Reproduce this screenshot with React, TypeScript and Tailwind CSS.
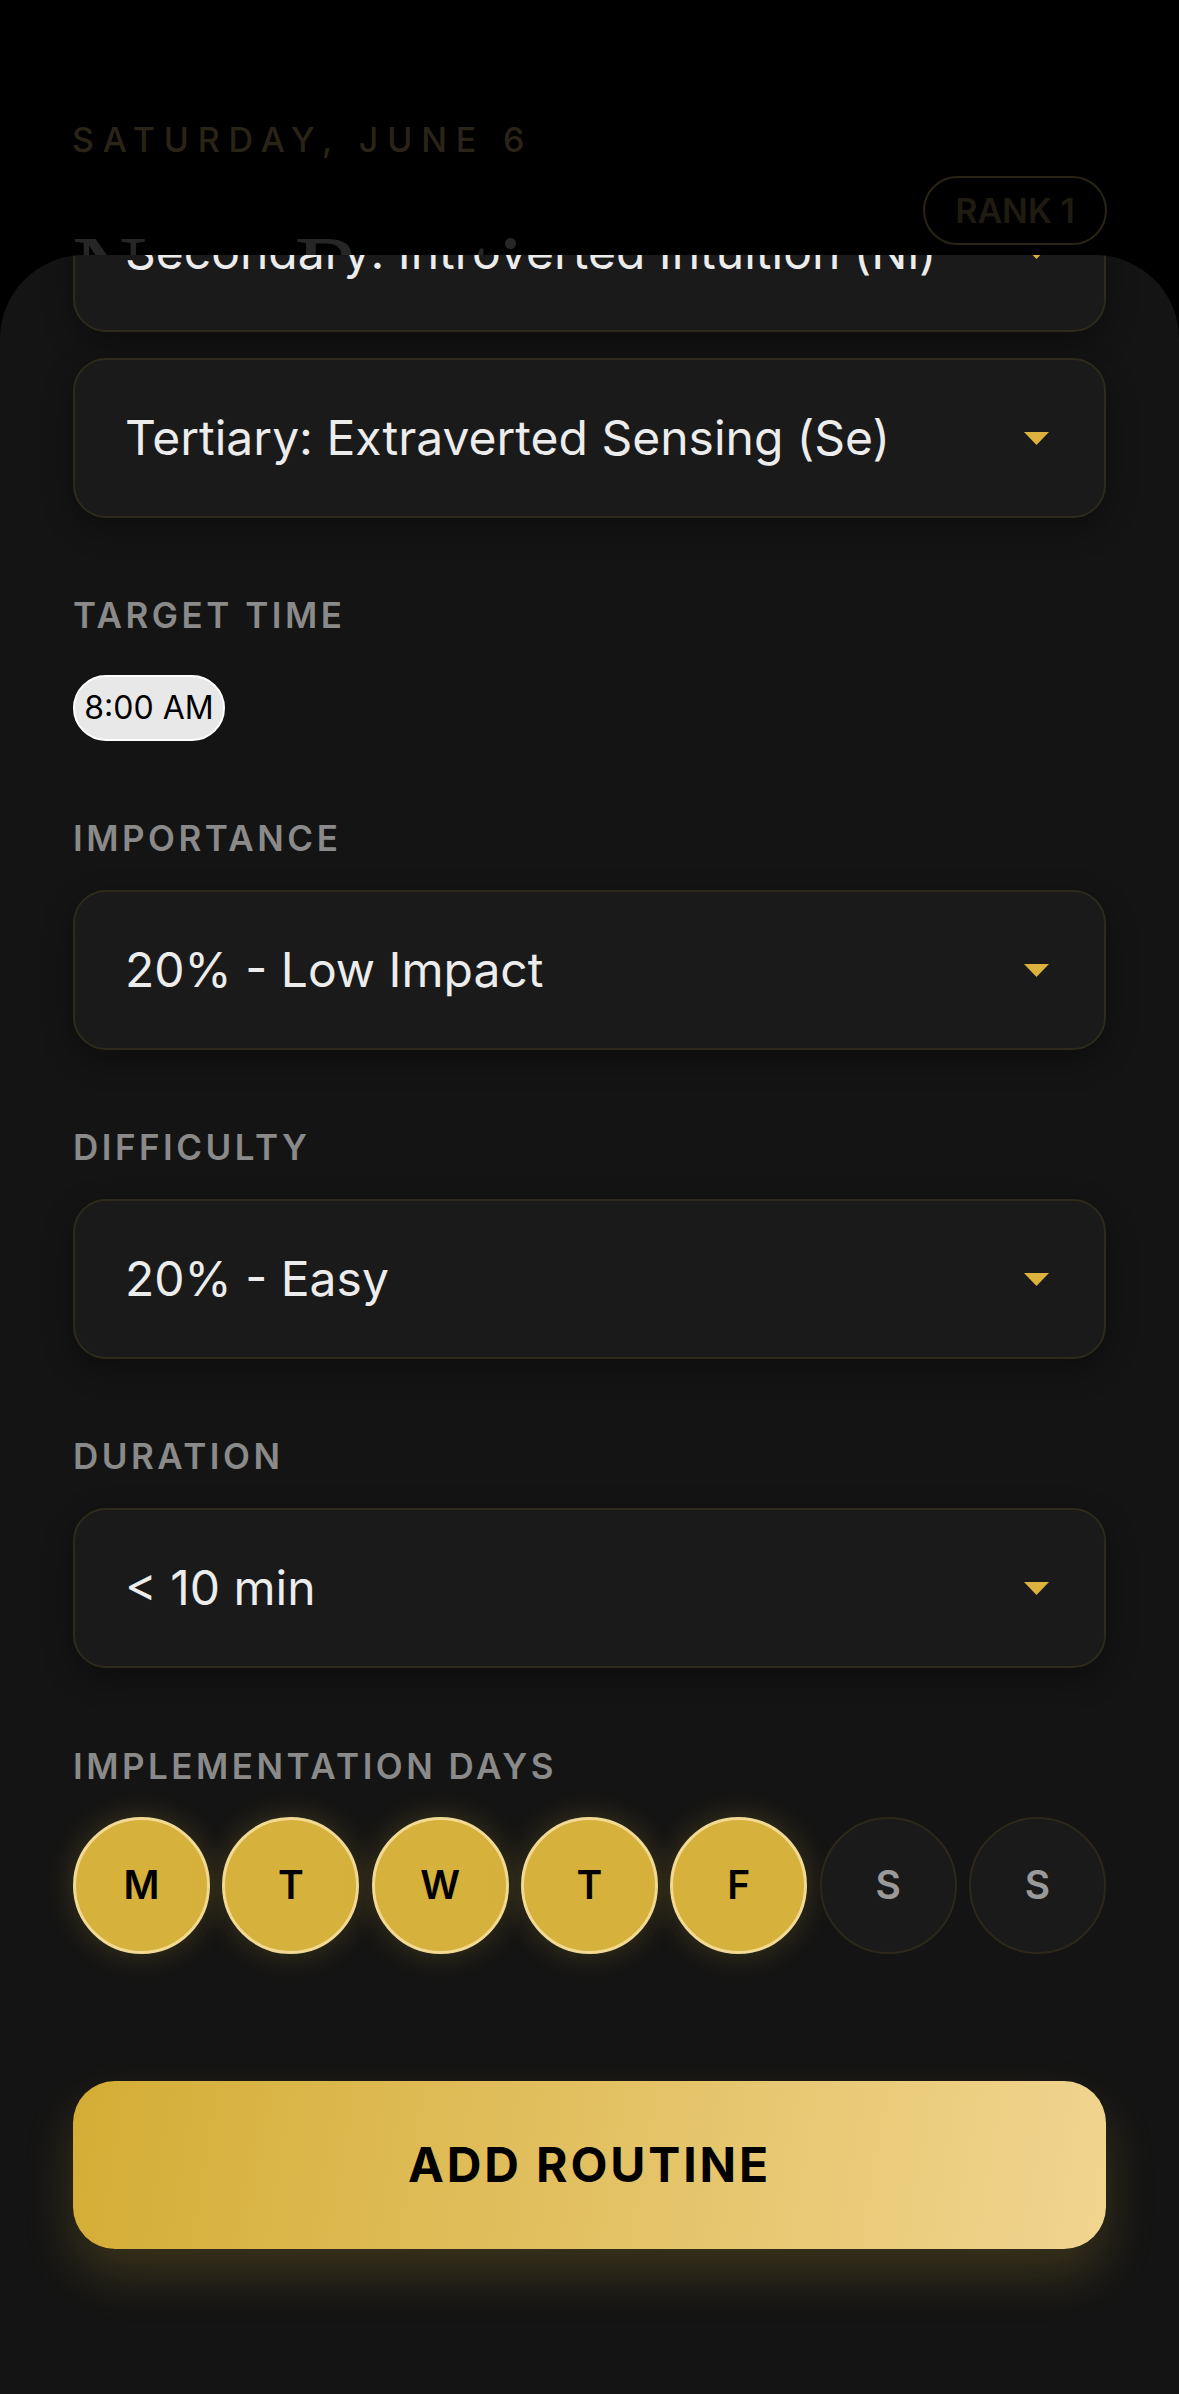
import React from 'react';

const days = [
  { key: 'mon', label: 'M', on: true },
  { key: 'tue', label: 'T', on: true },
  { key: 'wed', label: 'W', on: true },
  { key: 'thu', label: 'T', on: true },
  { key: 'fri', label: 'F', on: true },
  { key: 'sat', label: 'S', on: false },
  { key: 'sun', label: 'S', on: false },
];

function Caret() {
  return (
    <svg width="25" height="13" viewBox="0 0 25 13" aria-hidden="true">
      <polygon points="0,0 25,0 12.5,13" fill="#dcb23c" />
    </svg>
  );
}

function Select({ value }: { value: string }) {
  return (
    <div className="flex h-[160px] items-center justify-between rounded-[33px] border-2 border-[#2e2a1c] bg-[#1a1a1a] pl-[50px] pr-[55px] shadow-[0_10px_30px_rgba(0,0,0,0.35)]">
      <span className="text-[48px] leading-none text-[#ececec]">{value}</span>
      <Caret />
    </div>
  );
}

function Label({ children }: { children: React.ReactNode }) {
  return (
    <div className="text-[35px] font-semibold uppercase leading-none tracking-[0.1em] text-[#8a8a8a]">
      {children}
    </div>
  );
}

export default function App() {
  return (
    <div className="min-h-[2394px] w-[1179px] bg-black font-['Inter','Noto_Sans',sans-serif]">
      {/* header behind the sheet, dimmed by the overlay */}
      <div className="h-[255px] overflow-hidden px-[72px] pt-[123px]">
        <div className="text-[34px] font-medium uppercase leading-none tracking-[0.26em] text-[#2a2417]">
          Saturday, June 6
        </div>
        <div className="mt-[19px] flex items-start justify-between">
          <h1 className="mt-[44px] font-['Liberation_Serif',serif] text-[104px] leading-none text-[#262626]">
            New Routine
          </h1>
          <div className="flex h-[69px] w-[184px] items-center justify-center rounded-full border-2 border-[#2a2414] text-[34px] font-semibold text-[#1f1b10]">
            RANK 1
          </div>
        </div>
      </div>

      {/* sheet */}
      <div className="h-[2139px] overflow-hidden rounded-t-[84px] bg-[#141414]">
        <div className="-mt-[83px] flex flex-col px-[73px]">
          <Select value="Secondary: Introverted Intuition (Ni)" />
          <div className="mt-[26px]">
            <Select value="Tertiary: Extraverted Sensing (Se)" />
          </div>

          <div className="mt-[80px]">
            <Label>Target Time</Label>
            <div className="mt-[42px] flex">
              <div className="flex h-[66px] w-[152px] items-center justify-center rounded-full border-2 border-white bg-[#e8e8e8] text-[32px] leading-none text-black">
                8:00 AM
              </div>
            </div>
          </div>

          <div className="mt-[80px]">
            <Label>Importance</Label>
            <div className="mt-[34px]">
              <Select value="20% - Low Impact" />
            </div>
          </div>

          <div className="mt-[80px]">
            <Label>Difficulty</Label>
            <div className="mt-[34px]">
              <Select value="20% - Easy" />
            </div>
          </div>

          <div className="mt-[80px]">
            <Label>Duration</Label>
            <div className="mt-[34px]">
              <Select value="< 10 min" />
            </div>
          </div>

          <div className="mt-[81px]">
            <Label>Implementation Days</Label>
            <div className="mt-[33px] flex justify-between">
              {days.map((d) =>
                d.on ? (
                  <div
                    key={d.key}
                    className="flex h-[137px] w-[137px] items-center justify-center rounded-full border-[3px] border-[#f2da94] bg-[#d6b13c] text-[39px] font-semibold text-black shadow-[0_0_30px_rgba(214,177,60,0.22)]"
                  >
                    {d.label}
                  </div>
                ) : (
                  <div
                    key={d.key}
                    className="flex h-[137px] w-[137px] items-center justify-center rounded-full border-2 border-[#2d281b] bg-[#1a1a1a] text-[39px] font-semibold text-[#9a9a9a]"
                  >
                    {d.label}
                  </div>
                ),
              )}
            </div>
          </div>

          <button className="mt-[127px] flex h-[168px] items-center justify-center rounded-[42px] bg-[linear-gradient(100deg,#d4ad35,#f1d590)] text-[48px] font-bold tracking-[0.06em] text-black shadow-[0_26px_50px_rgba(212,173,53,0.2)]">
            ADD ROUTINE
          </button>
        </div>
      </div>
    </div>
  );
}
